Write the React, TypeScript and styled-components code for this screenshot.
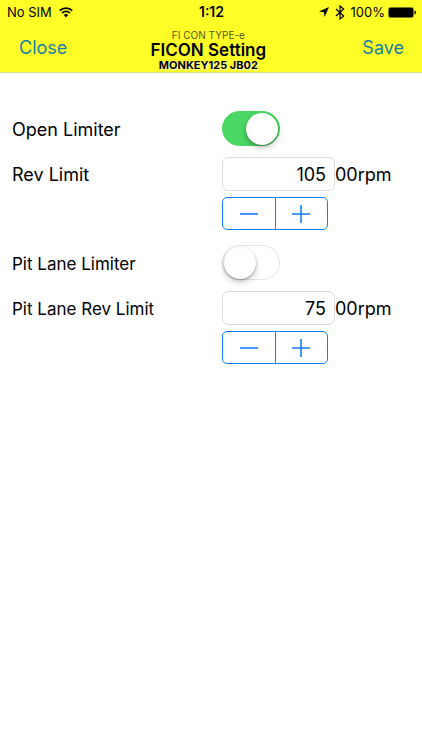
import React, { useId, useState } from "react";
import styled, { createGlobalStyle } from "styled-components";

const GlobalStyle = createGlobalStyle`
  *, *::before, *::after { box-sizing: border-box; }
  body {
    margin: 0;
    background: #fff;
    color: #000;
    font-family: Inter, "Liberation Sans", sans-serif;
  }
  button, input { font: inherit; }
`;

const Header = styled.header`
  background: #ffff27;
  border-bottom: 1px solid #dedc8c;
`;

const StatusBar = styled.div`
  display: grid;
  grid-template-columns: 1fr auto 1fr;
  align-items: center;
  height: 24px;
  padding: 0 6px 0 7px;
  font-size: 13px;
  line-height: 16px;
`;

const StatusGroup = styled.div<{ $end?: boolean }>`
  display: flex;
  align-items: center;
  justify-content: ${(p) => (p.$end ? "flex-end" : "flex-start")};
  gap: ${(p) => (p.$end ? 6 : 7)}px;
`;

const BatteryGroup = styled.span`
  display: flex;
  align-items: center;
  gap: 3px;
`;

const Clock = styled.time`
  font-size: 14px;
  font-weight: 600;
`;

const NavBar = styled.nav`
  display: grid;
  grid-template-columns: 21fr auto 22fr;
  align-items: center;
  height: 48px;
  padding: 0 18px 0 19px;
`;

const NavButton = styled.button<{ $end?: boolean }>`
  justify-self: ${(p) => (p.$end ? "end" : "start")};
  padding: 0;
  border: 0;
  background: none;
  color: #167fa8;
  font-size: 18px;
  line-height: 24px;
  cursor: pointer;
`;

const TitleBlock = styled.div`
  padding-top: 3px;
  text-align: center;
  white-space: nowrap;
`;

const Overline = styled.div`
  color: #55551a;
  font-size: 10px;
  line-height: 12px;
`;

const Title = styled.h1`
  margin: 0;
  font-size: 17px;
  font-weight: 600;
  line-height: 18px;
`;

const Subtitle = styled.div`
  font-size: 11px;
  font-weight: 700;
  line-height: 12px;
  text-shadow: 1px 1px 1px rgba(255, 255, 255, 0.8);
`;

const Form = styled.main`
  display: grid;
  gap: 15px;
  padding: 38px 12px;
`;

const Group = styled.section`
  display: grid;
  grid-template-columns: 210px 1fr;
  align-items: center;
  row-gap: 11px;
`;

const Label = styled.label<{ $compact: boolean }>`
  padding-top: 2px;
  font-size: ${(p) => (p.$compact ? 17 : 18)}px;
  line-height: 24px;
  white-space: nowrap;
`;

const Switch = styled.input`
  appearance: none;
  display: flex;
  align-items: center;
  width: 58px;
  height: 35px;
  margin: 0;
  padding: 0 1px;
  border: 1px solid #e3e3e3;
  border-radius: 18px;
  background: #fff;
  cursor: pointer;

  &::before {
    content: "";
    width: 32px;
    height: 32px;
    border-radius: 50%;
    background: #fff;
    box-shadow: 0 3px 6px rgba(0, 0, 0, 0.22), 0 1px 2px rgba(0, 0, 0, 0.28);
  }

  &:checked {
    justify-content: flex-end;
    border-color: #4bd763;
    background: #4bd763;
  }
`;

const ValueRow = styled.div`
  display: flex;
  align-items: center;
  font-size: 18px;
  line-height: 24px;
`;

const ValueInput = styled.input`
  width: 113px;
  height: 34px;
  padding: 0 8px;
  border: 1px solid #dcdcdc;
  border-radius: 6px;
  background: #fff;
  color: #000;
  text-align: right;
`;

const Unit = styled.span`
  padding-top: 2px;
`;

const Stepper = styled.div`
  grid-column: 2;
  display: flex;
  width: 106px;
  height: 33px;
  margin-top: -5px;
  border: 1px solid #147efb;
  border-radius: 5px;
`;

const StepButton = styled.button`
  display: grid;
  place-items: center;
  flex: 1;
  padding: 0;
  border: 0;
  background: none;
  color: #147efb;
  cursor: pointer;

  & + & { border-left: 1px solid #147efb; }
`;

const WifiIcon = () => (
  <svg width="14" height="11" viewBox="0 0 14 11" fill="none" stroke="#000" aria-hidden="true">
    <path d="M.8 3.7a9 9 0 0 1 12.4 0" strokeWidth="1.8" />
    <path d="M3 6a5.8 5.8 0 0 1 8 0" strokeWidth="1.7" />
    <path d="M7 10.5 4.8 8.1a3.2 3.2 0 0 1 4.4 0Z" fill="#000" stroke="none" />
  </svg>
);

const LocationIcon = () => (
  <svg width="10" height="10" viewBox="0 0 10 10" aria-hidden="true">
    <path d="M10 0 5.6 10 4.9 5.3 0 4.6Z" />
  </svg>
);

const BluetoothIcon = () => (
  <svg width="10" height="15" viewBox="0 0 10 15" fill="none" stroke="#000" strokeWidth="1.2" aria-hidden="true">
    <path d="m1 4 7.6 7L5 14V1l3.6 3L1 11" />
  </svg>
);

const BatteryIcon = () => (
  <svg width="28" height="11" viewBox="0 0 28 11" aria-hidden="true">
    <rect x=".5" y=".5" width="25" height="10" rx="2" fill="none" stroke="#77771f" />
    <rect x="1" y="1" width="24" height="9" rx="1" />
    <path d="M26.5 3.5c2 .6 2 3.4 0 4Z" />
  </svg>
);

const StepIcon = ({ plus }: { plus?: boolean }) => (
  <svg width="18" height="18" viewBox="0 0 18 18" fill="none" stroke="currentColor" strokeWidth="1.6" aria-hidden="true">
    <path d={plus ? "M0 9h18M9 0v18" : "M0 9h18"} />
  </svg>
);

interface LimiterProps {
  toggleLabel: string;
  valueLabel: string;
  initialOn: boolean;
  initialValue: number;
  compact?: boolean;
}

function Limiter({ toggleLabel, valueLabel, initialOn, initialValue, compact = false }: LimiterProps) {
  const id = useId();
  const [on, setOn] = useState(initialOn);
  const [value, setValue] = useState(initialValue);

  return (
    <Group>
      <Label $compact={compact} htmlFor={`${id}-on`}>{toggleLabel}</Label>
      <Switch id={`${id}-on`} type="checkbox" role="switch" checked={on} onChange={(e) => setOn(e.target.checked)} />
      <Label $compact={compact} htmlFor={`${id}-value`}>{valueLabel}</Label>
      <ValueRow>
        <ValueInput
          id={`${id}-value`}
          inputMode="numeric"
          value={value}
          onChange={(e) => setValue(Number(e.target.value) || 0)}
        />
        <Unit>00rpm</Unit>
      </ValueRow>
      <Stepper role="group" aria-label={valueLabel}>
        <StepButton type="button" aria-label="Decrease" onClick={() => setValue(Math.max(0, value - 1))}>
          <StepIcon />
        </StepButton>
        <StepButton type="button" aria-label="Increase" onClick={() => setValue(value + 1)}>
          <StepIcon plus />
        </StepButton>
      </Stepper>
    </Group>
  );
}

export default function App() {
  return (
    <>
      <GlobalStyle />
      <Header>
        <StatusBar>
          <StatusGroup>
            <span>No SIM</span>
            <WifiIcon />
          </StatusGroup>
          <Clock>1:12</Clock>
          <StatusGroup $end>
            <LocationIcon />
            <BluetoothIcon />
            <BatteryGroup>
              <span>100%</span>
              <BatteryIcon />
            </BatteryGroup>
          </StatusGroup>
        </StatusBar>
        <NavBar>
          <NavButton type="button">Close</NavButton>
          <TitleBlock>
            <Overline>FI CON TYPE-e</Overline>
            <Title>FICON Setting</Title>
            <Subtitle>MONKEY125 JB02</Subtitle>
          </TitleBlock>
          <NavButton type="button" $end>Save</NavButton>
        </NavBar>
      </Header>
      <Form>
        <Limiter toggleLabel="Open Limiter" valueLabel="Rev Limit" initialOn initialValue={105} />
        <Limiter
          toggleLabel="Pit Lane Limiter"
          valueLabel="Pit Lane Rev Limit"
          initialOn={false}
          initialValue={75}
          compact
        />
      </Form>
    </>
  );
}
